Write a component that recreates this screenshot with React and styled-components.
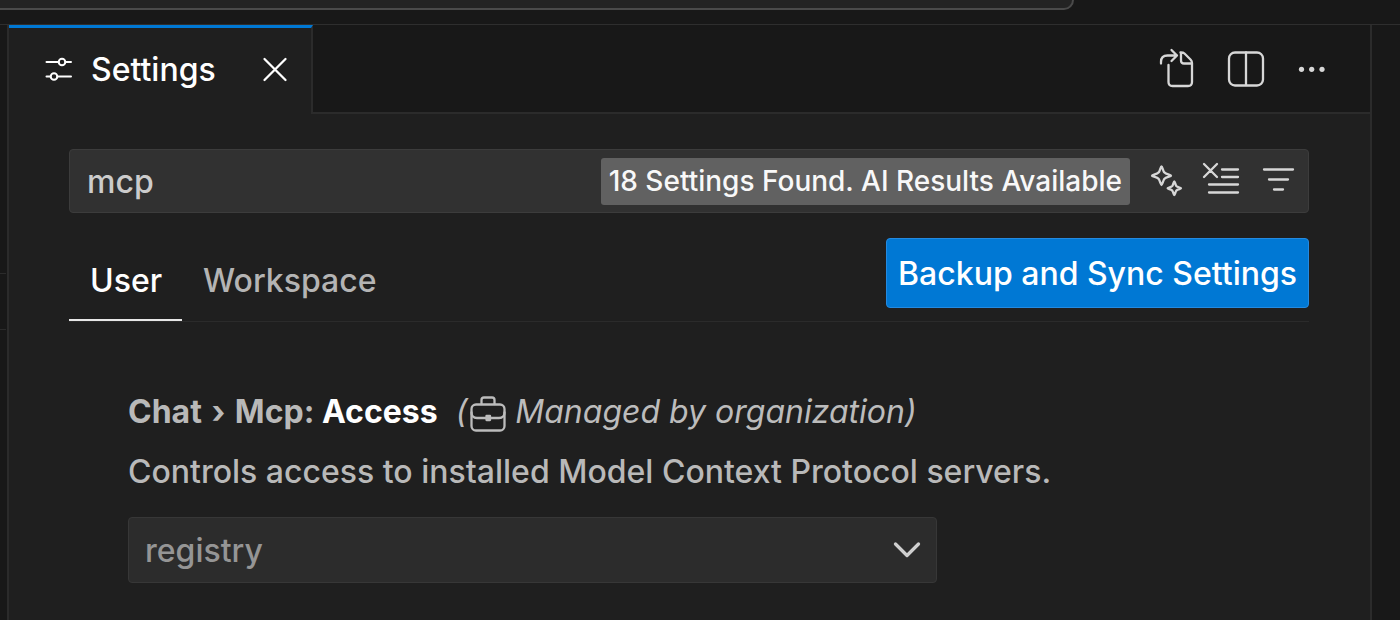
import React, { useState } from "react";
import styled, { createGlobalStyle } from "styled-components";

const GlobalStyle = createGlobalStyle`
  *, *::before, *::after { box-sizing: border-box; }
  body {
    margin: 0;
    background: #181818;
    color: #cccccc;
    font-family: Inter, "Liberation Sans", sans-serif;
    font-size: 32px;
    font-weight: 450;
    line-height: 40px;
  }
  button, input, select { font: inherit; color: inherit; margin: 0; }
`;

const Page = styled.div`
  min-height: 100vh;
  display: flex;
  flex-direction: column;
`;

const TitleBar = styled.header`
  height: 25px;
  border-bottom: 1px solid #2e2e2e;
  padding-right: 326px;
`;

const CommandCenter = styled.div`
  height: 10px;
  background: #232323;
  border: solid #4a4a4a;
  border-width: 0 2px 2px 0;
  border-bottom-right-radius: 16px;
`;

const Workbench = styled.div`
  flex: 1;
  display: flex;
`;

const SideBar = styled.div`
  width: 7px;
  padding-top: 248px;
`;

const SideItem = styled.div`
  height: 57px;
  margin-right: 1px;
  border: solid #2b2b2b;
  border-width: 1px 0;
`;

const EditorGroup = styled.main`
  flex: 1;
  min-width: 0;
  margin-right: 28px;
  background: #1f1f1f;
  border: solid #2b2b2b;
  border-width: 0 2px;
`;

const TabBar = styled.div`
  display: flex;
  height: 89px;
`;

const Tab = styled.div`
  display: flex;
  align-items: center;
  width: 304px;
  padding: 0 18px 2px 32px;
  color: #ffffff;
  border-top: 3px solid #0078d4;
  border-right: 2px solid #2b2b2b;
`;

const TabLabel = styled.span`
  flex: 1;
  margin-left: 14px;
`;

const EditorActions = styled.div`
  flex: 1;
  display: flex;
  align-items: center;
  justify-content: flex-end;
  gap: 24px;
  padding-right: 35px;
  background: #181818;
  border-bottom: 2px solid #2b2b2b;
`;

const IconButton = styled.button`
  display: flex;
  align-items: center;
  justify-content: center;
  flex: none;
  width: ${(p) => p.$size}px;
  height: ${(p) => p.$size}px;
  padding: 0;
  border: 0;
  background: transparent;
  color: ${(p) => p.$color || "#d7d7d7"};
`;

const Glyph = styled.svg`
  display: block;
  flex: none;
  fill: none;
  stroke: currentColor;
  stroke-width: ${(p) => p.$stroke || 2.3};
  stroke-linecap: round;
  stroke-linejoin: round;
`;

const Content = styled.div`
  padding: 35px 61px 36px 60px;
`;

const SearchBox = styled.div`
  display: flex;
  align-items: center;
  height: 64px;
  padding: 0 10px 0 17px;
  background: #313131;
  border: 1px solid #3c3c3c;
  border-radius: 4px;
`;

const SearchInput = styled.input`
  flex: 1;
  min-width: 0;
  padding: 2px 0 0;
  border: 0;
  outline: 0;
  background: transparent;
`;

const ResultCount = styled.span`
  padding: 4px 8px;
  margin-right: 16px;
  border-radius: 3px;
  background: #616161;
  color: #f8f8f8;
  font-size: 28px;
  line-height: 39px;
  white-space: nowrap;
`;

const SearchActions = styled.div`
  display: flex;
  gap: 16px;
`;

const ScopeBar = styled.div`
  display: flex;
  align-items: flex-end;
  height: 109px;
  border-bottom: 1px solid #2b2b2b;
`;

const ScopeTab = styled.button`
  padding: 0 20px 18px 21px;
  border: 0;
  border-bottom: 2px solid ${(p) => (p.$active ? "#e7e7e7" : "transparent")};
  background: transparent;
  color: ${(p) => (p.$active ? "#ffffff" : "#b4b4b4")};
`;

const SyncButton = styled.button`
  height: 70px;
  margin: 0 0 13px auto;
  padding: 2px 11px 0;
  border: 1px solid #248ae0;
  border-radius: 4px;
  background: #0078d4;
  color: #ffffff;
  white-space: nowrap;
`;

const Setting = styled.section`
  padding: 70px 0 0 59px;
`;

const SettingHeading = styled.div`
  display: flex;
  align-items: center;
`;

const SettingTitle = styled.h2`
  margin: 0 18px 0 0;
  font-size: 32px;
  font-weight: 700;
  color: #b9b9b9;
`;

const Separator = styled.span`
  margin: 0 2px;
`;

const SettingName = styled.span`
  color: #ffffff;
`;

const Policy = styled.em`
  display: flex;
  align-items: center;
  color: #bcbcbc;
`;

const PolicyText = styled.span`
  margin-left: 8px;
`;

const Description = styled.label`
  display: block;
  margin: 20px 0 25px;
  color: #b9b9b9;
`;

const SelectWrap = styled.div`
  position: relative;
  max-width: 809px;
`;

const Select = styled.select`
  display: block;
  width: 100%;
  height: 66px;
  padding: 2px 60px 0 16px;
  appearance: none;
  border: 1px solid #373737;
  border-radius: 4px;
  background: #2c2c2c;
  color: #959595;
  opacity: 1;
`;

const SelectArrow = styled(Glyph)`
  position: absolute;
  top: 23px;
  right: 15px;
  color: #cfcfcf;
  pointer-events: none;
`;

const SettingsIcon = () => (
  <Glyph $stroke={2} width="36" height="36" viewBox="0 0 36 36" aria-hidden="true">
    <path d="M5.500 10H17.500M24.500 10H30M5.500 24.500H9.500M16.500 24.500H30" />
    <circle cx="21" cy="10" r="3.300" />
    <circle cx="13" cy="24.500" r="3.300" />
  </Glyph>
);

const CloseIcon = () => (
  <Glyph width="36" height="36" viewBox="0 0 36 36" aria-hidden="true">
    <path d="M7.500 7L28.500 28M28.500 7L7.500 28" />
  </Glyph>
);

const OpenFileIcon = () => (
  <Glyph width="44" height="44" viewBox="0 0 44 44" aria-hidden="true">
    <path d="M6 16.500V15C6 11 8.500 8.500 12.500 8.500H22M16.500 3L22 8.500L16.500 14" />
    <path d="M13.500 18V35C13.500 37.500 15 39 17.500 39H33C35.500 39 37 37.500 37 35V16C37 14.500 36.500 13.500 35.500 12.500L29.500 6.500C28.500 5.500 27.500 5.500 25.500 5.500" />
    <path d="M26 6V13.500C26 15.500 27 16.500 29 16.500H36.500" />
  </Glyph>
);

const SplitIcon = () => (
  <Glyph width="44" height="44" viewBox="0 0 44 44" aria-hidden="true">
    <rect x="6" y="5.500" width="34" height="33" rx="6" />
    <path d="M23 5.500V38" />
  </Glyph>
);

const MoreIcon = () => (
  <Glyph width="44" height="44" viewBox="0 0 44 44" aria-hidden="true">
    <g fill="currentColor" stroke="none">
      <circle cx="10.500" cy="22.300" r="2.600" />
      <circle cx="20.700" cy="22.300" r="2.600" />
      <circle cx="31" cy="22.300" r="2.600" />
    </g>
  </Glyph>
);

const SparkleIcon = () => (
  <Glyph width="40" height="40" viewBox="0 0 40 40" aria-hidden="true">
    <path d="M15.500 5.500C16.300 5.500 17 9.500 18.200 11.300C20 13.500 25 13.800 25 14.700C25 15.600 20 15.900 18.200 18.100C17 19.900 16.300 24 15.500 24C14.700 24 14 19.900 12.800 18.100C11 15.900 6 15.600 6 14.700C6 13.800 11 13.500 12.800 11.300C14 9.500 14.700 5.500 15.500 5.500Z" />
    <path d="M28.300 20.500C29 20.500 29.300 23.600 30.300 25C31.700 26.400 35 26.600 35 27.300C35 28 31.700 28.200 30.300 29.600C29.300 31 29 34 28.300 34C27.600 34 27.300 31 26.300 29.600C24.900 28.200 21.600 28 21.600 27.300C21.600 26.600 24.900 26.400 26.300 25C27.300 23.600 27.600 20.500 28.300 20.500Z" />
  </Glyph>
);

const ClearIcon = () => (
  <Glyph width="40" height="40" viewBox="0 0 40 40" aria-hidden="true">
    <path d="M2 3L15 16M15 3L2 16M20 8.500H36M20 16H36M7 23.500H36M7 31.500H36" />
  </Glyph>
);

const FilterIcon = () => (
  <Glyph width="40" height="40" viewBox="0 0 40 40" aria-hidden="true">
    <path d="M6 8.500H35M11 18.500H30M16 28.500H25" />
  </Glyph>
);

const BriefcaseIcon = () => (
  <Glyph width="40" height="40" viewBox="0 0 40 40" aria-hidden="true">
    <rect x="4.500" y="12.500" width="33" height="26" rx="4.500" />
    <path d="M14.500 12V8C14.500 6.500 15.500 5.500 17 5.500H25C26.500 5.500 27.500 6.500 27.500 8V12M4.500 20.500C4.500 24 6.500 26 10 26H18.500M37.500 20.500C37.500 24 35.500 26 32 26H23.500" />
    <rect x="19.500" y="24" width="3.500" height="4" fill="currentColor" />
  </Glyph>
);

export default function App() {
  const [query, setQuery] = useState("mcp");

  return (
    <>
      <GlobalStyle />
      <Page>
        <TitleBar>
          <CommandCenter />
        </TitleBar>
        <Workbench>
          <SideBar>
            <SideItem />
          </SideBar>
          <EditorGroup>
            <TabBar>
              <Tab>
                <SettingsIcon />
                <TabLabel>Settings</TabLabel>
                <IconButton $size={36} $color="#ffffff" aria-label="Close">
                  <CloseIcon />
                </IconButton>
              </Tab>
              <EditorActions>
                <IconButton $size={44} aria-label="Open Settings (JSON)">
                  <OpenFileIcon />
                </IconButton>
                <IconButton $size={44} aria-label="Split Editor">
                  <SplitIcon />
                </IconButton>
                <IconButton $size={44} aria-label="More Actions">
                  <MoreIcon />
                </IconButton>
              </EditorActions>
            </TabBar>
            <Content>
              <SearchBox>
                <SearchInput
                  aria-label="Search settings"
                  value={query}
                  onChange={(e) => setQuery(e.target.value)}
                />
                <ResultCount>18 Settings Found. AI Results Available</ResultCount>
                <SearchActions>
                  <IconButton $size={40} aria-label="Show AI Results">
                    <SparkleIcon />
                  </IconButton>
                  <IconButton $size={40} aria-label="Clear Search">
                    <ClearIcon />
                  </IconButton>
                  <IconButton $size={40} aria-label="Filter Settings">
                    <FilterIcon />
                  </IconButton>
                </SearchActions>
              </SearchBox>
              <ScopeBar>
                <ScopeTab $active>User</ScopeTab>
                <ScopeTab>Workspace</ScopeTab>
                <SyncButton>Backup and Sync Settings</SyncButton>
              </ScopeBar>
              <Setting>
                <SettingHeading>
                  <SettingTitle>
                    Chat <Separator>›</Separator> Mcp: <SettingName>Access</SettingName>
                  </SettingTitle>
                  <Policy>
                    <span>(</span>
                    <BriefcaseIcon />
                    <PolicyText>Managed by organization)</PolicyText>
                  </Policy>
                </SettingHeading>
                <Description htmlFor="mcp-access">
                  Controls access to installed Model Context Protocol servers.
                </Description>
                <SelectWrap>
                  <Select id="mcp-access" disabled defaultValue="registry">
                    <option value="registry">registry</option>
                  </Select>
                  <SelectArrow $stroke={3.3} width="30" height="22" viewBox="0 0 30 22" aria-hidden="true">
                    <path d="M3.500 4L15 15.500L26.500 4" />
                  </SelectArrow>
                </SelectWrap>
              </Setting>
            </Content>
          </EditorGroup>
        </Workbench>
      </Page>
    </>
  );
}
